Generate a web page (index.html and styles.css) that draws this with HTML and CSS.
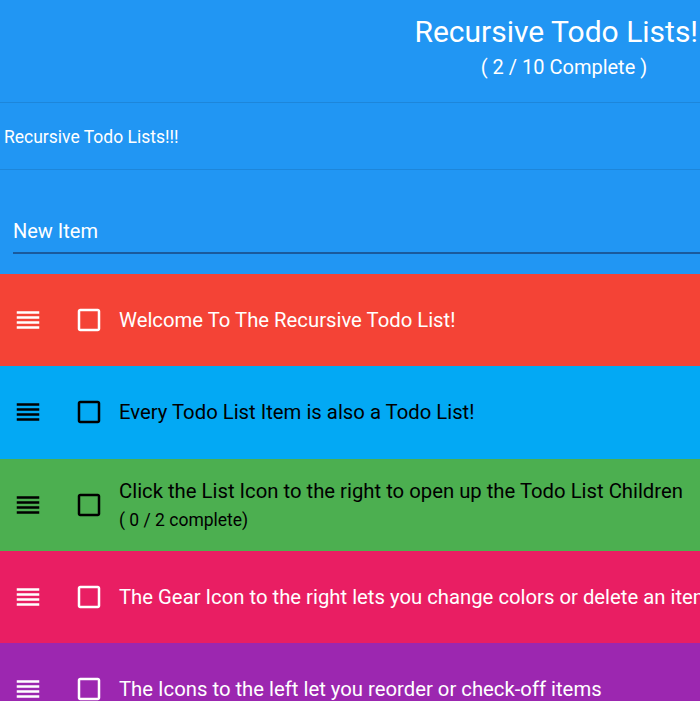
FILE: index.html
```html
<!DOCTYPE html>
<html>
<head>
<meta charset="utf-8">
<link rel="stylesheet" href="styles.css">
</head>
<body>
<div class="page">
  <header class="header">
    <h1 class="title">Recursive Todo Lists!!!</h1>
    <div class="subtitle">( 2 / 10 Complete )</div>
  </header>
  <nav class="crumbs">Recursive Todo Lists!!!</nav>
  <section class="new-item">
    <div class="field">New Item</div>
  </section>
  <ul class="list">
    <li class="row red light">
      <svg class="icon handle" viewBox="0 0 24 24"><path d="M3 15h18v-2H3v2zm0 4h18v-2H3v2zm0-8h18V9H3v2zm0-6v2h18V5H3z"/></svg>
      <svg class="icon check" viewBox="0 0 24 24"><path d="M19 5v14H5V5h14m0-2H5c-1.1 0-2 .9-2 2v14c0 1.1.9 2 2 2h14c1.1 0 2-.9 2-2V5c0-1.1-.9-2-2-2z"/></svg>
      <div class="text"><div class="main">Welcome To The Recursive Todo List!</div></div>
    </li>
    <li class="row blue dark">
      <svg class="icon handle" viewBox="0 0 24 24"><path d="M3 15h18v-2H3v2zm0 4h18v-2H3v2zm0-8h18V9H3v2zm0-6v2h18V5H3z"/></svg>
      <svg class="icon check" viewBox="0 0 24 24"><path d="M19 5v14H5V5h14m0-2H5c-1.1 0-2 .9-2 2v14c0 1.1.9 2 2 2h14c1.1 0 2-.9 2-2V5c0-1.1-.9-2-2-2z"/></svg>
      <div class="text"><div class="main">Every Todo List Item is also a Todo List!</div></div>
    </li>
    <li class="row green dark">
      <svg class="icon handle" viewBox="0 0 24 24"><path d="M3 15h18v-2H3v2zm0 4h18v-2H3v2zm0-8h18V9H3v2zm0-6v2h18V5H3z"/></svg>
      <svg class="icon check" viewBox="0 0 24 24"><path d="M19 5v14H5V5h14m0-2H5c-1.1 0-2 .9-2 2v14c0 1.1.9 2 2 2h14c1.1 0 2-.9 2-2V5c0-1.1-.9-2-2-2z"/></svg>
      <div class="text"><div class="main">Click the List Icon to the right to open up the Todo List Children</div><div class="sub">( 0 / 2 complete)</div></div>
    </li>
    <li class="row pink light">
      <svg class="icon handle" viewBox="0 0 24 24"><path d="M3 15h18v-2H3v2zm0 4h18v-2H3v2zm0-8h18V9H3v2zm0-6v2h18V5H3z"/></svg>
      <svg class="icon check" viewBox="0 0 24 24"><path d="M19 5v14H5V5h14m0-2H5c-1.1 0-2 .9-2 2v14c0 1.1.9 2 2 2h14c1.1 0 2-.9 2-2V5c0-1.1-.9-2-2-2z"/></svg>
      <div class="text"><div class="main">The Gear Icon to the right lets you change colors or delete an item</div></div>
    </li>
    <li class="row purple light">
      <svg class="icon handle" viewBox="0 0 24 24"><path d="M3 15h18v-2H3v2zm0 4h18v-2H3v2zm0-8h18V9H3v2zm0-6v2h18V5H3z"/></svg>
      <svg class="icon check" viewBox="0 0 24 24"><path d="M19 5v14H5V5h14m0-2H5c-1.1 0-2 .9-2 2v14c0 1.1.9 2 2 2h14c1.1 0 2-.9 2-2V5c0-1.1-.9-2-2-2z"/></svg>
      <div class="text"><div class="main">The Icons to the left let you reorder or check-off items</div></div>
    </li>
  </ul>
</div>
</body>
</html>
```

FILE: styles.css
```css
html, body {
  margin: 0;
  padding: 0;
  overflow: hidden;
}
body {
  font-family: Roboto, "Liberation Sans", sans-serif;
  background: #2196f3;
}
.page {
  width: 1128px;
}
.header {
  height: 103px;
  box-sizing: border-box;
  border-bottom: 1px solid rgba(0, 0, 0, 0.1);
  color: #fff;
  text-align: center;
  padding-top: 14px;
}
.title {
  margin: 0;
  font-size: 30px;
  font-weight: 400;
  line-height: 36px;
}
.subtitle {
  font-size: 20px;
  line-height: 26px;
  margin-top: 4px;
}
.crumbs {
  height: 67px;
  box-sizing: border-box;
  border-bottom: 1px solid rgba(0, 0, 0, 0.1);
  color: #fff;
  font-size: 17.5px;
  display: flex;
  align-items: center;
  padding: 1px 0 0 4px;
}
.new-item {
  height: 104px;
  box-sizing: border-box;
  padding: 47px 0 0 13px;
}
.field {
  color: #fff;
  font-size: 20px;
  line-height: 28px;
  padding-bottom: 7px;
  border-bottom: 2px solid #1a5a9c;
}
.list {
  list-style: none;
  margin: 0;
  padding: 0;
}
.row {
  height: 92.25px;
  display: flex;
  align-items: center;
  padding-left: 13px;
}
.red { background: #f44336; }
.blue { background: #03a9f4; }
.green { background: #4caf50; }
.pink { background: #e91e63; }
.purple { background: #9c27b0; }
.light { color: #fff; fill: #fff; }
.dark { color: #000; fill: #000; }
.icon {
  width: 30px;
  height: 30px;
  flex: none;
}
.check {
  margin-left: 31px;
}
.text {
  margin-left: 15px;
  white-space: nowrap;
}
.main {
  font-size: 20.3px;
  line-height: 28px;
}
.sub {
  font-size: 17.5px;
  line-height: 26px;
  margin-top: 2px;
}
```
